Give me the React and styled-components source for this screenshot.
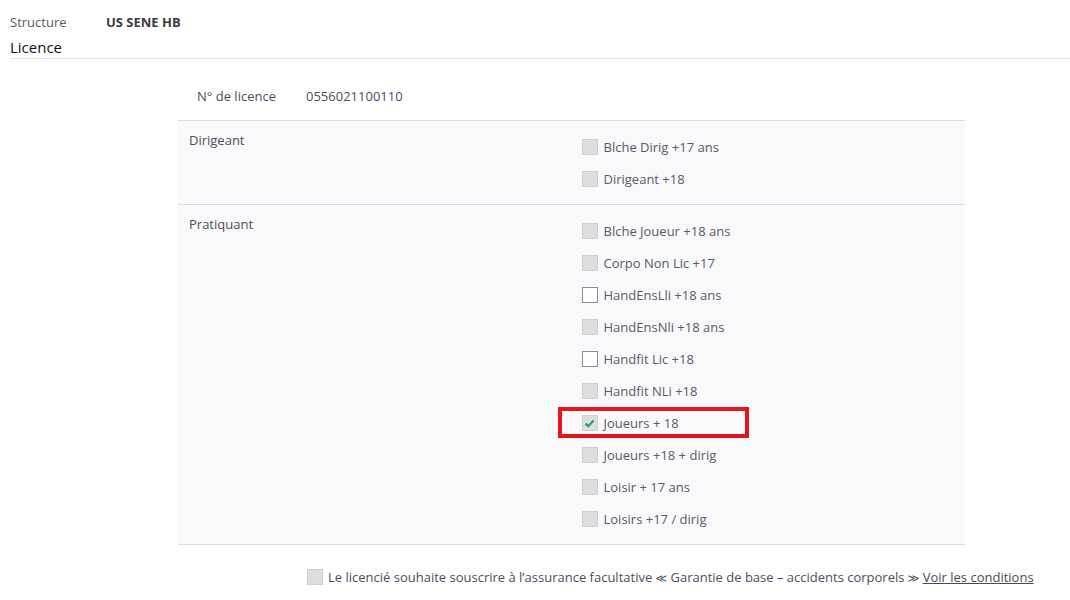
import React from "react";
import styled, { createGlobalStyle } from "styled-components";

const Global = createGlobalStyle`
  html, body { margin: 0; padding: 0; background: #fff; }
  body { font-family: "Open Sans", "Noto Sans", sans-serif; font-size: 13px; color: #4d4d5c; }
`;

const Page = styled.div`
  padding: 12px 0 0 10px;
`;

const InfoRow = styled.div`
  display: flex;
  align-items: center;
  height: 20px;
`;

const InfoLabel = styled.span`
  width: 96px;
  color: #5a5a66;
`;

const InfoValue = styled.span`
  font-weight: 700;
  color: #3a3a44;
`;

const Title = styled.div`
  font-size: 15px;
  color: #111;
  line-height: 20px;
  padding: 5px 0 1px;
  border-bottom: 1px solid #e3e3e6;
`;

const Form = styled.div`
  margin: 27px 105px 0 168px;
`;

const LicenceRow = styled.div`
  display: flex;
  align-items: center;
  height: 20px;
  padding-left: 19px;
  margin-bottom: 14px;
`;

const LicenceLabel = styled.span`
  width: 109px;
`;

const Panel = styled.div`
  background: #f9f9fb;
  border-bottom: 1px solid #dcdce0;
`;

const Section = styled.div`
  display: grid;
  grid-template-columns: 1fr 1fr;
  border-top: 1px solid #dcdce0;
  padding: 10px 0 9px;
`;

const SectionLabel = styled.div`
  padding-left: 11px;
  line-height: 18px;
  color: #4d4d58;
`;

const Options = styled.div`
  padding-left: 10px;
  display: flex;
  flex-direction: column;
`;

const Option = styled.label`
  position: relative;
  display: flex;
  align-items: center;
  height: 32px;
  gap: 6px;
  color: #555a6c;
`;

const Box = styled.span`
  box-sizing: border-box;
  width: 16px;
  height: 16px;
  flex: none;
  display: inline-flex;
  align-items: center;
  justify-content: center;
  border: 1px solid ${p => (p.$enabled ? "#8b89a6" : "#cfcfd2")};
  background: ${p => (p.$enabled ? "#fff" : "#dedee0")};
`;

const Highlight = styled.span`
  position: absolute;
  left: -24px;
  top: 0;
  width: 191px;
  height: 31px;
  box-sizing: border-box;
  border: 4px solid #e5141d;
  pointer-events: none;
`;

const Footer = styled.div`
  display: flex;
  align-items: center;
  gap: 5px;
  margin: 22px 0 0 129px;
  height: 20px;
  white-space: nowrap;
`;

const Quote = styled.span`
  font-family: "DejaVu Sans", sans-serif;
  font-size: 11px;
`;

const Link = styled.a`
  color: #4a4a55;
  text-decoration: underline;
`;

const Check = () => (
  <svg width="11" height="9" viewBox="0 0 11 9">
    <path d="M1.5 4.6 L4.2 7.2 L9.6 1.6" fill="none" stroke="#23a06e" strokeWidth="2.2" />
  </svg>
);

const dirigeant = [
  { label: "Blche Dirig +17 ans" },
  { label: "Dirigeant +18" },
];

const pratiquant = [
  { label: "Blche Joueur +18 ans" },
  { label: "Corpo Non Lic +17" },
  { label: "HandEnsLli +18 ans", enabled: true },
  { label: "HandEnsNli +18 ans" },
  { label: "Handfit Lic +18", enabled: true },
  { label: "Handfit NLi +18" },
  { label: "Joueurs + 18", checked: true, highlight: true },
  { label: "Joueurs +18 + dirig" },
  { label: "Loisir + 17 ans" },
  { label: "Loisirs +17 / dirig" },
];

const OptionList = ({ items }) => (
  <Options>
    {items.map(it => (
      <Option key={it.label}>
        <Box $enabled={it.enabled}>{it.checked && <Check />}</Box>
        <span>{it.label}</span>
        {it.highlight && <Highlight />}
      </Option>
    ))}
  </Options>
);

export default function App() {
  return (
    <>
      <Global />
      <Page>
        <InfoRow>
          <InfoLabel>Structure</InfoLabel>
          <InfoValue>US SENE HB</InfoValue>
        </InfoRow>
        <Title>Licence</Title>
        <Form>
          <LicenceRow>
            <LicenceLabel>N° de licence</LicenceLabel>
            <span>0556021100110</span>
          </LicenceRow>
          <Panel>
            <Section>
              <SectionLabel>Dirigeant</SectionLabel>
              <OptionList items={dirigeant} />
            </Section>
            <Section>
              <SectionLabel>Pratiquant</SectionLabel>
              <OptionList items={pratiquant} />
            </Section>
          </Panel>
          <Footer>
            <Box />
            <span>
              Le licencié souhaite souscrire à l’assurance facultative <Quote>≪</Quote> Garantie de base – accidents corporels <Quote>≫</Quote> <Link href="#">Voir les conditions</Link>
            </span>
          </Footer>
        </Form>
      </Page>
    </>
  );
}
